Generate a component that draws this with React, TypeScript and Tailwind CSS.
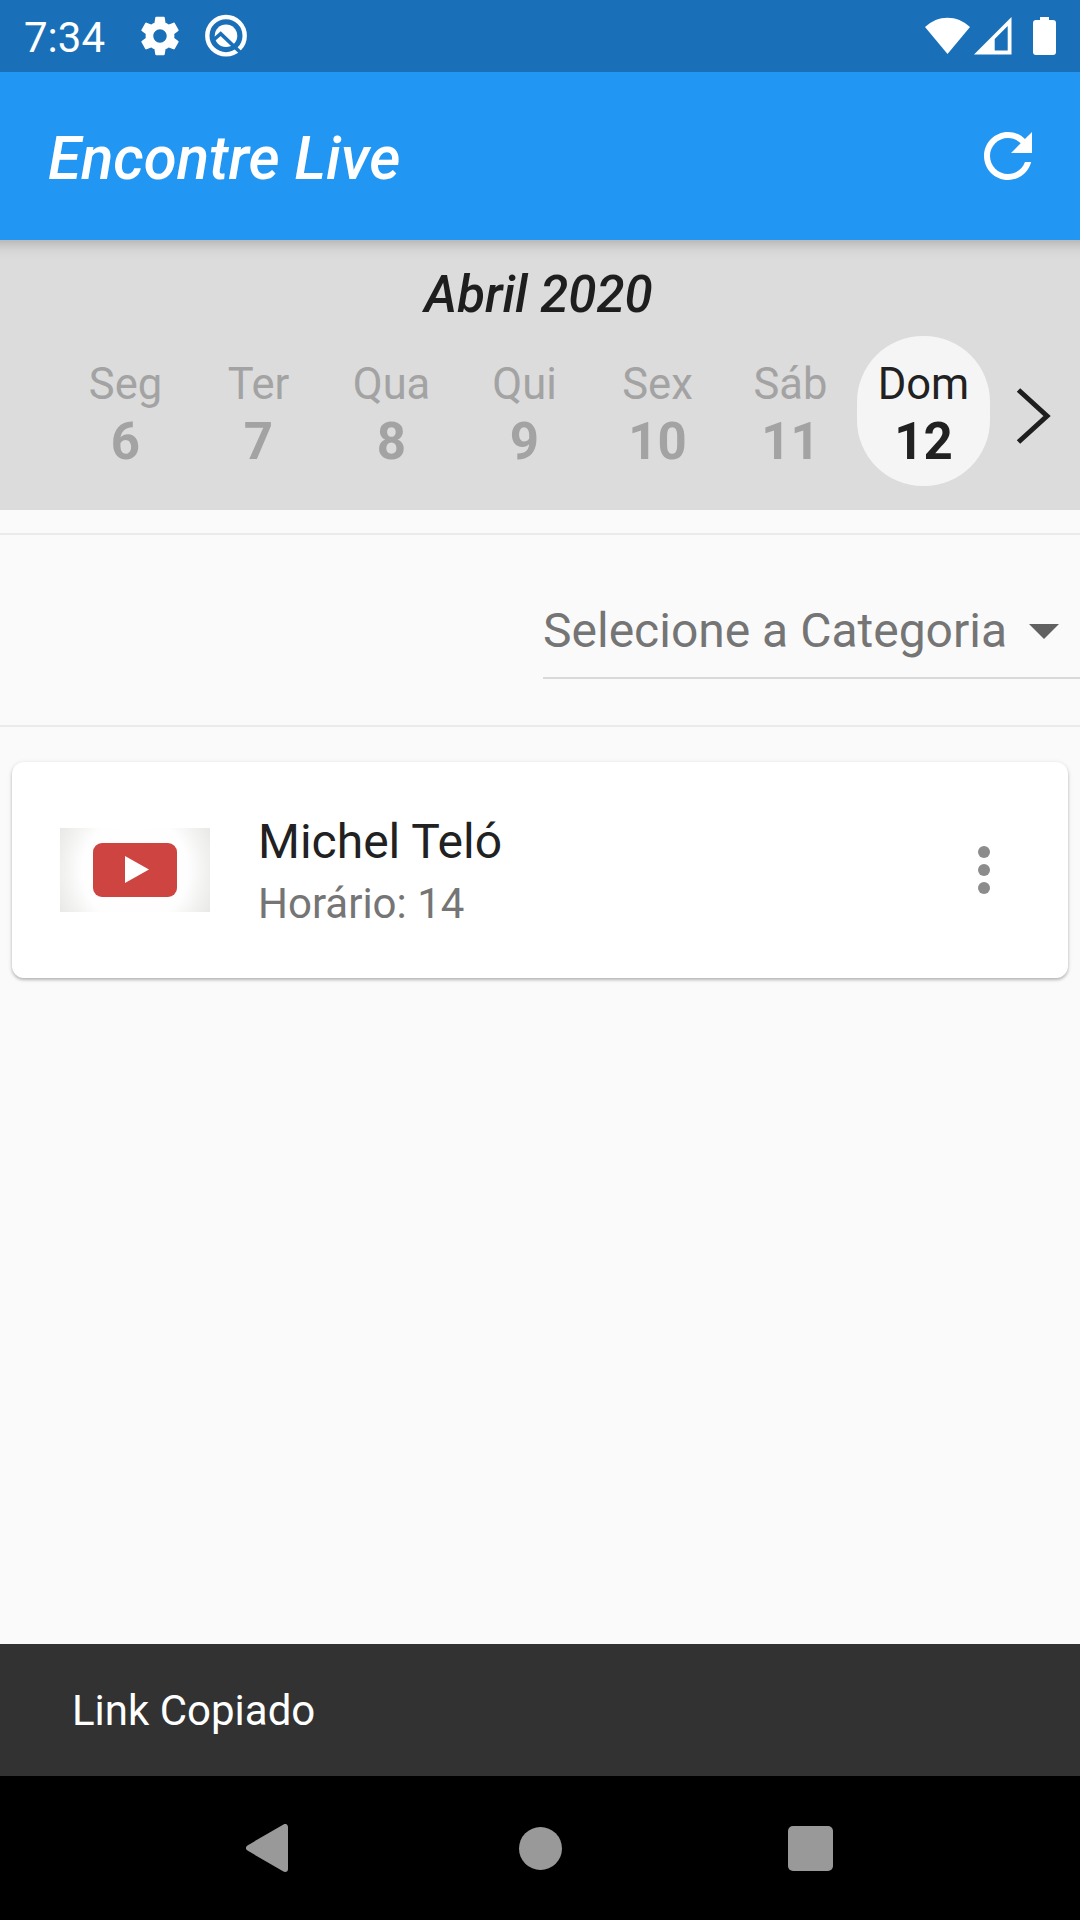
const days = [
  { name: "Seg", num: "6" },
  { name: "Ter", num: "7" },
  { name: "Qua", num: "8" },
  { name: "Qui", num: "9" },
  { name: "Sex", num: "10" },
  { name: "Sáb", num: "11" },
  { name: "Dom", num: "12", active: true },
];

function StatusBar() {
  return (
    <div className="flex h-[72px] items-center bg-[#1a70b8] pl-6 text-white">
      <span className="w-[113px] pt-[3px] text-[42px] leading-[69px]">7:34</span>
      <svg className="h-[46px] w-[46px]" viewBox="0 0 24 24" fill="currentColor">
        <path d="M19.43 12.98c.04-.32.07-.64.07-.98s-.03-.66-.07-.98l2.11-1.65c.19-.15.24-.42.12-.64l-2-3.46c-.12-.22-.39-.3-.61-.22l-2.49 1c-.52-.4-1.08-.73-1.69-.98l-.38-2.65C14.46 2.18 14.25 2 14 2h-4c-.25 0-.46.18-.49.42l-.38 2.65c-.61.25-1.17.59-1.69.98l-2.49-1c-.23-.09-.49 0-.61.22l-2 3.46c-.13.22-.07.49.12.64l2.11 1.65c-.04.32-.07.65-.07.98s.03.66.07.98l-2.11 1.65c-.19.15-.24.42-.12.64l2 3.46c.12.22.39.3.61.22l2.49-1c.52.4 1.08.73 1.69.98l.38 2.65c.03.24.24.42.49.42h4c.25 0 .46-.18.49-.42l.38-2.65c.61-.25 1.17-.59 1.69-.98l2.49 1c.23.09.49 0 .61-.22l2-3.46c.12-.22.07-.49-.12-.64l-2.11-1.65zM12 15.5c-1.93 0-3.5-1.57-3.5-3.5s1.57-3.5 3.5-3.5 3.5 1.57 3.5 3.5-1.57 3.5-3.5 3.5z" />
      </svg>
      <svg className="ml-[21px] h-11 w-11" viewBox="0 0 44 44" fill="none">
        <circle cx="22" cy="21.700" r="18.700" stroke="#fff" strokeWidth="4.400" />
        <circle cx="22" cy="21.700" r="11.300" fill="#fff" />
        <path d="M10 25.500L16.700 19.700L37 39" stroke="#1a70b8" strokeWidth="3.600" />
      </svg>
      <svg className="ml-auto mr-6 h-[38px] w-[132px]" viewBox="0 0 132 38" fill="#fff">
        <path d="M1 10C14-2.500 33-2.500 46 10L23.500 37z" />
        <path fillRule="evenodd" d="M87.500 0V37.500H50zM83.700 9L70.700 22V33.500H83.700z" />
        <path d="M116-1h9v4h4q3 0 3 3v29q0 3-3 3h-17q-3 0-3-3V6q0-3 3-3h4z" />
      </svg>
    </div>
  );
}

function AppBar() {
  return (
    <header className="flex h-[168px] items-center justify-between bg-[#2196f3] pl-12 pr-9 text-white">
      <h1 className="pt-[5px] text-[60px] font-medium italic leading-[72px]">Encontre Live</h1>
      <svg className="h-[72px] w-[72px]" viewBox="0 0 24 24" fill="currentColor">
        <path d="M17.65 6.35C16.2 4.9 14.21 4 12 4c-4.420 0-7.990 3.580-7.990 8s3.570 8 7.990 8c3.730 0 6.840-2.550 7.730-6h-2.080c-.82 2.330-3.040 4-5.650 4-3.310 0-6-2.690-6-6s2.690-6 6-6c1.660 0 3.140.69 4.220 1.780L13 11h7V4l-2.350 2.350z" />
      </svg>
    </header>
  );
}

function Calendar() {
  return (
    <section className="flex h-[270px] flex-col bg-[#dcdcdc] bg-[linear-gradient(to_bottom,#b9b9b9_0px,#c8c8c8_5px,#d4d4d4_10px,#dadada_15px,#dcdcdc_20px)] text-[#1e1e1e]">
      <h2 className="h-24 pt-[25px] pr-[3px] text-center text-[51px] font-medium italic leading-[60px]">Abril 2020</h2>
      <div className="flex h-[150px] items-center pl-[59px]">
        <div className="grid h-[150px] w-[931px] grid-cols-7">
          {days.map((d) => (
            <div
              key={d.num}
              className={
                d.active
                  ? "flex flex-col items-center rounded-[66px] bg-[#f5f5f5] pt-5 text-[#212121]"
                  : "flex flex-col items-center pt-5 text-[#a3a3a3]"
              }
            >
              <span className="text-[43.5px] leading-[57px]">{d.name}</span>
              <span className="text-[51px] font-bold leading-[58px]">{d.num}</span>
            </div>
          ))}
        </div>
        <svg className="ml-[26px] mt-2.5 h-[58px] w-9" viewBox="0 0 36 58" fill="none">
          <path d="M2.500 3L31 29L2.500 55" stroke="#1e1e1e" strokeWidth="5" />
        </svg>
      </div>
    </section>
  );
}

function CategorySelect() {
  return (
    <section className="mt-[23px] flex h-[194px] justify-end border-y-2 border-[#ebebeb]">
      <div className="mt-[60px] flex h-[84px] w-[537px] items-start border-b-2 border-[#d9d9d9]">
        <span className="whitespace-nowrap text-[48px] leading-[72px] text-[#757575]">Selecione a Categoria</span>
        <svg className="ml-auto mr-[21px] mt-[29px] h-[15px] w-[30px] shrink-0" viewBox="0 0 30 15">
          <path d="M0 0H30L15 15z" fill="#616161" />
        </svg>
      </div>
    </section>
  );
}

function LiveCard() {
  return (
    <article className="mx-3 mt-[35px] flex h-[216px] items-center rounded-xl bg-white pl-12 pr-12 shadow-[0_2px_3px_rgba(0,0,0,0.2),0_1px_5px_rgba(0,0,0,0.12)]">
      <div className="flex h-[84px] w-[150px] items-center justify-center bg-[radial-gradient(circle,#ffffff_0%,#fdfefd_62%,#e8e8e6_100%)]">
        <div className="flex h-[54px] w-[84px] items-center justify-center rounded-[9px] bg-[#cd4440]">
          <svg className="mb-px ml-[3px] h-[27px] w-6" viewBox="0 0 24 27">
            <path d="M0 0L24 13.500L0 27z" fill="#fff" />
          </svg>
        </div>
      </div>
      <div className="ml-12 flex flex-col pt-[5px]">
        <span className="text-[48px] leading-[60px] text-[#212121]">Michel Teló</span>
        <span className="pt-px text-[42px] leading-[61px] text-[#757575]">Horário: 14</span>
      </div>
      <svg className="ml-auto h-[72px] w-[72px]" viewBox="0 0 24 24" fill="#8c8c8c">
        <circle cx="12" cy="6" r="2" />
        <circle cx="12" cy="12" r="2" />
        <circle cx="12" cy="18" r="2" />
      </svg>
    </article>
  );
}

function NavBar() {
  return (
    <nav className="flex h-36 items-center bg-black pl-[246px]">
      <svg className="h-12 w-[42px]" viewBox="0 0 42 48">
        <path d="M39 3V45L3 24z" fill="#999" stroke="#999" strokeWidth="6" strokeLinejoin="round" />
      </svg>
      <span className="ml-[230.5px] h-[43px] w-[43px] rounded-full bg-[#999]" />
      <span className="ml-[226px] h-[45px] w-[45px] rounded-[5px] bg-[#999]" />
    </nav>
  );
}

export default function App() {
  return (
    <div className="flex h-[1920px] w-[1080px] flex-col overflow-hidden bg-[#fafafa] font-['Roboto',sans-serif]">
      <StatusBar />
      <AppBar />
      <Calendar />
      <CategorySelect />
      <LiveCard />
      <div className="mt-auto h-[132px] bg-[#323232] pl-[72px] text-[42px] leading-[134px] text-white">Link Copiado</div>
      <NavBar />
    </div>
  );
}
